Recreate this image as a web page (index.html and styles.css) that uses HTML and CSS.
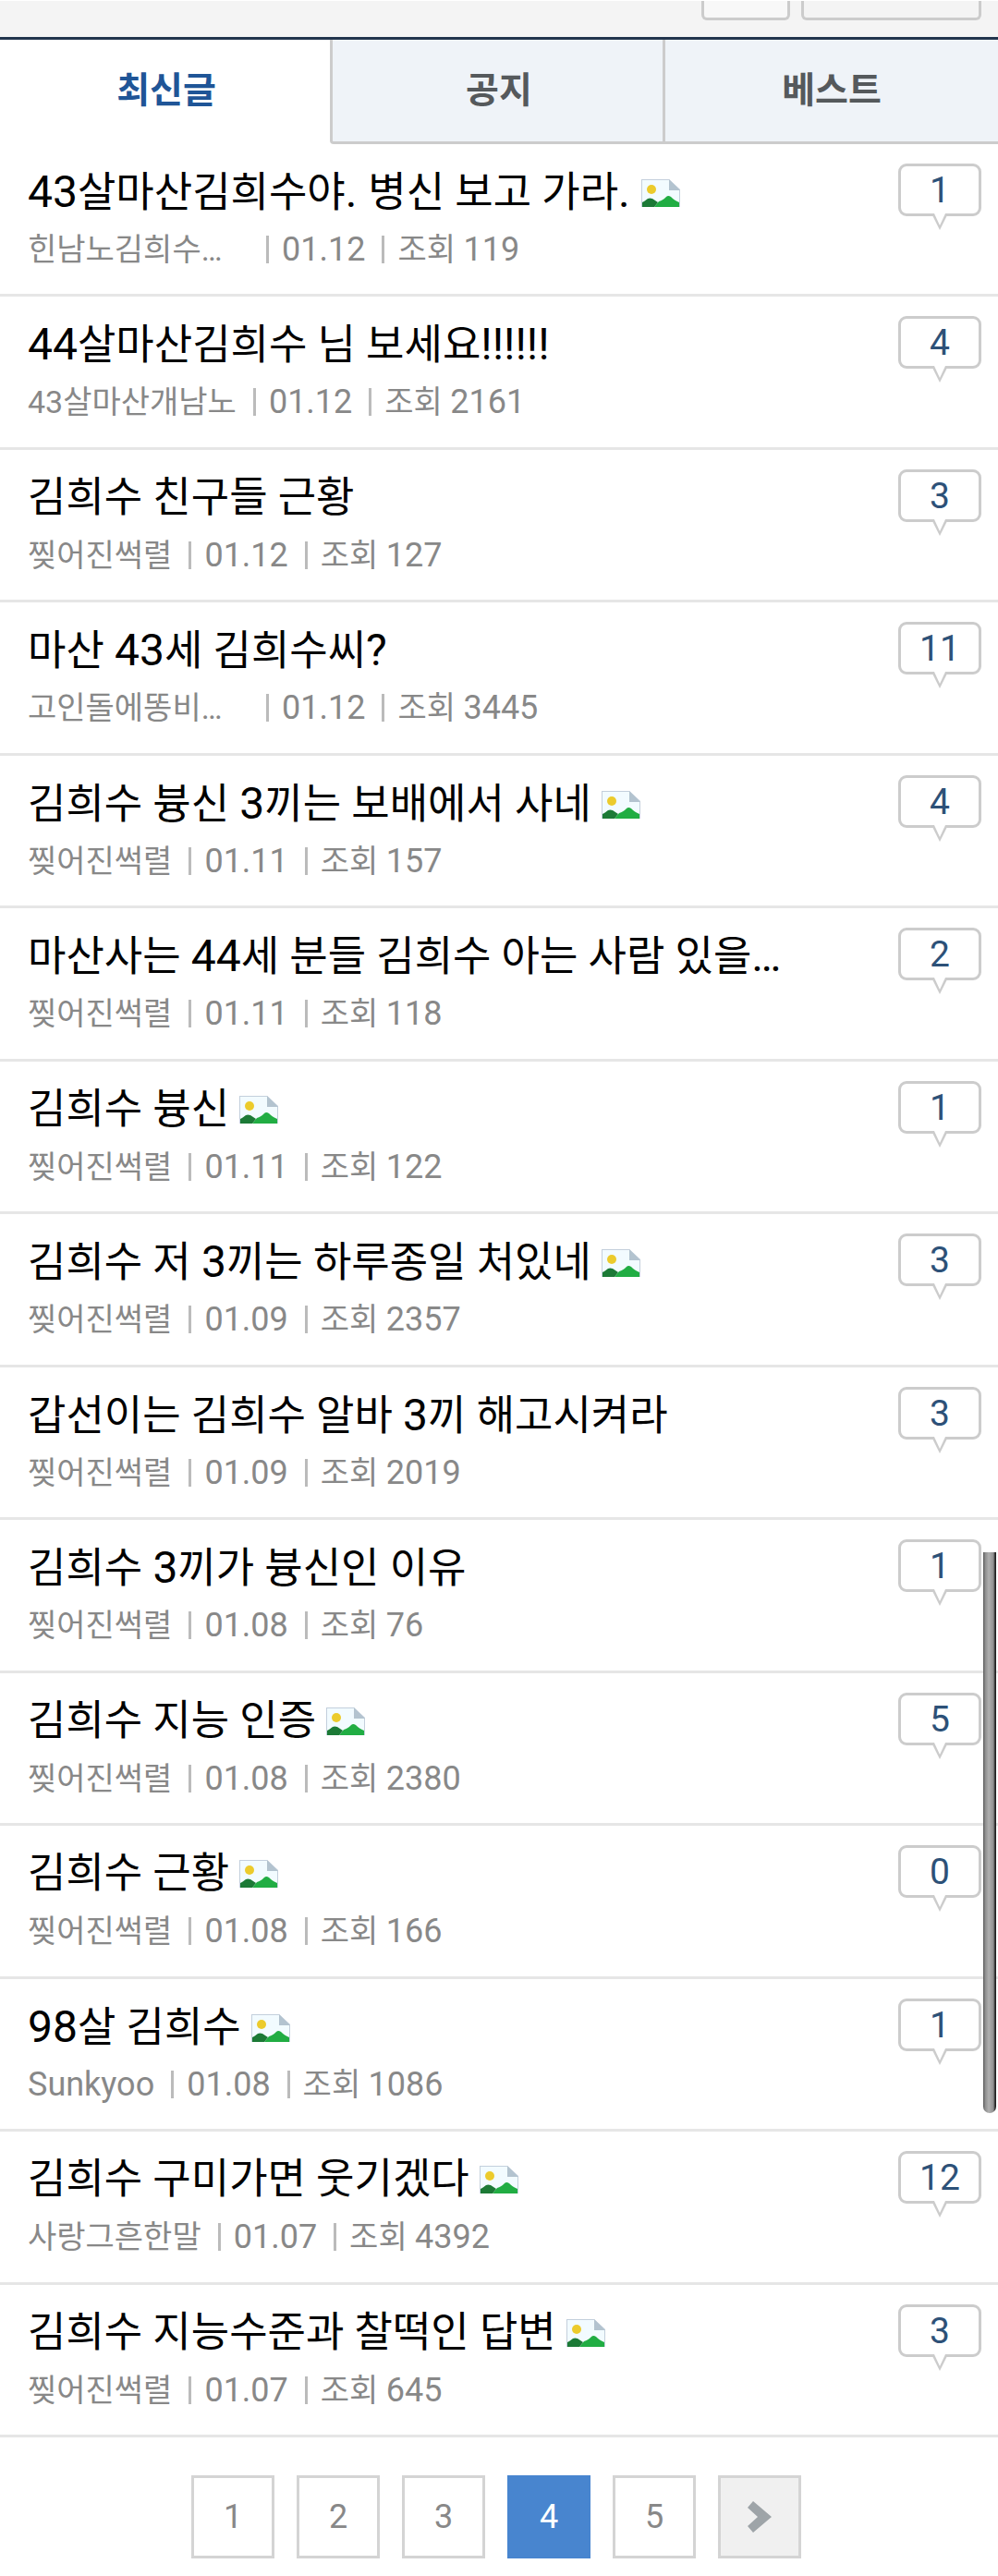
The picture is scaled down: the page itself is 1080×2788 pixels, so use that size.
FILE: index.html
```html
<!DOCTYPE html>
<html lang="ko">
<head>
  <meta charset="UTF-8">
  <meta name="viewport" content="width=device-width, initial-scale=1">
  <title>게시판</title>
  <link rel="stylesheet" href="styles.css">
</head>
<body>
  <!-- Picture icon used by the titles -->
  <svg class="defs" aria-hidden="true">
    <symbol id="pic" viewBox="0 0 42 30">
      <path d="M0 0h30l12 11v19H0z" fill="#c3cfdc"/>
      <path d="M1 1h29v11h11v18H1z" fill="#f2fbff"/>
      <path d="M30 0v12h12z" fill="#b3c3cf"/>
      <circle cx="11" cy="11" r="5" fill="#eccb2c"/>
      <path d="M14 30l5-6c3-1 5-2 8-5q2-2 5 0c3 3 5 4 9 6v5z" fill="#21ad43"/>
      <path d="M1 30v-5c3-1 4-3 6-4q2-1 5 0l6 4-4 5z" fill="#1c7a36"/>
    </symbol>
  </svg>

  <header class="top">
    <button class="top-btn" type="button" aria-label="검색"></button>
    <button class="top-btn wide" type="button" aria-label="글쓰기"></button>
  </header>

  <nav class="tabs">
    <a class="tab on" href="#">최신글</a>
    <a class="tab" href="#">공지</a>
    <a class="tab" href="#">베스트</a>
  </nav>

  <ul class="list">
    <li class="item">
      <div class="post">
        <a class="title" href="#"><span class="num">43</span>살마산김희수야<span class="num">. </span>병신 보고 가라<span class="num">. </span><svg class="pic"><use href="#pic"/></svg></a>
        <div class="meta"><span class="name cut">힌남노김희수…</span><span class="num">01.12</span><span>조회 <span class="num">119</span></span></div>
      </div>
      <a class="reply" href="#">1</a>
    </li>
    <li class="item">
      <div class="post">
        <a class="title" href="#"><span class="num">44</span>살마산김희수 님 보세요<span class="num">!!!!!!</span></a>
        <div class="meta"><span class="name">43살마산개남노</span><span class="num">01.12</span><span>조회 <span class="num">2161</span></span></div>
      </div>
      <a class="reply" href="#">4</a>
    </li>
    <li class="item">
      <div class="post">
        <a class="title" href="#">김희수 친구들 근황</a>
        <div class="meta"><span class="name">찢어진썩렬</span><span class="num">01.12</span><span>조회 <span class="num">127</span></span></div>
      </div>
      <a class="reply" href="#">3</a>
    </li>
    <li class="item">
      <div class="post">
        <a class="title" href="#">마산 <span class="num">43</span>세 김희수씨<span class="num">?</span></a>
        <div class="meta"><span class="name cut">고인돌에똥비…</span><span class="num">01.12</span><span>조회 <span class="num">3445</span></span></div>
      </div>
      <a class="reply" href="#">11</a>
    </li>
    <li class="item">
      <div class="post">
        <a class="title" href="#">김희수 븅신 <span class="num">3</span>끼는 보배에서 사네 <svg class="pic"><use href="#pic"/></svg></a>
        <div class="meta"><span class="name">찢어진썩렬</span><span class="num">01.11</span><span>조회 <span class="num">157</span></span></div>
      </div>
      <a class="reply" href="#">4</a>
    </li>
    <li class="item">
      <div class="post">
        <a class="title" href="#">마산사는 <span class="num">44</span>세 분들 김희수 아는 사람 있을<span class="num">…</span></a>
        <div class="meta"><span class="name">찢어진썩렬</span><span class="num">01.11</span><span>조회 <span class="num">118</span></span></div>
      </div>
      <a class="reply" href="#">2</a>
    </li>
    <li class="item">
      <div class="post">
        <a class="title" href="#">김희수 븅신 <svg class="pic"><use href="#pic"/></svg></a>
        <div class="meta"><span class="name">찢어진썩렬</span><span class="num">01.11</span><span>조회 <span class="num">122</span></span></div>
      </div>
      <a class="reply" href="#">1</a>
    </li>
    <li class="item">
      <div class="post">
        <a class="title" href="#">김희수 저 <span class="num">3</span>끼는 하루종일 처있네 <svg class="pic"><use href="#pic"/></svg></a>
        <div class="meta"><span class="name">찢어진썩렬</span><span class="num">01.09</span><span>조회 <span class="num">2357</span></span></div>
      </div>
      <a class="reply" href="#">3</a>
    </li>
    <li class="item">
      <div class="post">
        <a class="title" href="#">갑선이는 김희수 알바 <span class="num">3</span>끼 해고시켜라</a>
        <div class="meta"><span class="name">찢어진썩렬</span><span class="num">01.09</span><span>조회 <span class="num">2019</span></span></div>
      </div>
      <a class="reply" href="#">3</a>
    </li>
    <li class="item">
      <div class="post">
        <a class="title" href="#">김희수 <span class="num">3</span>끼가 븅신인 이유</a>
        <div class="meta"><span class="name">찢어진썩렬</span><span class="num">01.08</span><span>조회 <span class="num">76</span></span></div>
      </div>
      <a class="reply" href="#">1</a>
    </li>
    <li class="item">
      <div class="post">
        <a class="title" href="#">김희수 지능 인증 <svg class="pic"><use href="#pic"/></svg></a>
        <div class="meta"><span class="name">찢어진썩렬</span><span class="num">01.08</span><span>조회 <span class="num">2380</span></span></div>
      </div>
      <a class="reply" href="#">5</a>
    </li>
    <li class="item">
      <div class="post">
        <a class="title" href="#">김희수 근황 <svg class="pic"><use href="#pic"/></svg></a>
        <div class="meta"><span class="name">찢어진썩렬</span><span class="num">01.08</span><span>조회 <span class="num">166</span></span></div>
      </div>
      <a class="reply" href="#">0</a>
    </li>
    <li class="item">
      <div class="post">
        <a class="title" href="#"><span class="num">98</span>살 김희수 <svg class="pic"><use href="#pic"/></svg></a>
        <div class="meta"><span class="name num">Sunkyoo</span><span class="num">01.08</span><span>조회 <span class="num">1086</span></span></div>
      </div>
      <a class="reply" href="#">1</a>
    </li>
    <li class="item">
      <div class="post">
        <a class="title" href="#">김희수 구미가면 웃기겠다 <svg class="pic"><use href="#pic"/></svg></a>
        <div class="meta"><span class="name">사랑그흔한말</span><span class="num">01.07</span><span>조회 <span class="num">4392</span></span></div>
      </div>
      <a class="reply" href="#">12</a>
    </li>
    <li class="item">
      <div class="post">
        <a class="title" href="#">김희수 지능수준과 찰떡인 답변 <svg class="pic"><use href="#pic"/></svg></a>
        <div class="meta"><span class="name">찢어진썩렬</span><span class="num">01.07</span><span>조회 <span class="num">645</span></span></div>
      </div>
      <a class="reply" href="#">3</a>
    </li>
  </ul>

  <!-- Paging -->
  <nav class="paging">
    <a href="#">1</a>
    <a href="#">2</a>
    <a href="#">3</a>
    <a class="on" href="#">4</a>
    <a href="#">5</a>
    <a class="next" href="#" aria-label="다음">
      <svg width="26" height="34" viewBox="0 0 26 34"><path d="M6 0l20 17L6 34 0 27l11-10L0 7z" fill="#9ea4a8"/></svg>
    </a>
  </nav>

  <div class="scrollbar"></div>
</body>
</html>
```

FILE: styles.css
```css
* {
  box-sizing: border-box;
}

body {
  margin: 0;
  position: relative;
  background: #fff;
  color: #000;
  font-family: Roboto, "Noto Sans CJK KR", sans-serif;
}

a {
  color: inherit;
  text-decoration: none;
}

.defs {
  display: none;
}

/* Top bar */
.top {
  display: flex;
  justify-content: flex-end;
  gap: 12px;
  padding: 0 18px 18px;
  background: #f4f4f4;
  border-top: 1px solid #fff;
  border-bottom: 3px solid #22354d;
}

.top-btn {
  width: 96px;
  height: 21px;
  padding: 0;
  background: #f8f8f8;
  border: 3px solid #ccc;
  border-top: 0;
  border-radius: 0 0 6px 6px;
}

.top-btn.wide {
  width: 195px;
  background: #f4f4f4;
}

/* Tabs */
.tabs {
  display: grid;
  grid-template-columns: repeat(3, 1fr);
}

.tab {
  height: 113px;
  margin-left: -3px;
  background: #eff3f8;
  border-left: 3px solid #ccc;
  border-bottom: 3px solid #ccc;
  color: #55595c;
  font-size: 39px;
  font-weight: bold;
  line-height: 110px;
  text-align: center;
}

.tab:nth-child(2) {
  border-bottom-left-radius: 4px;
}

.tab.on {
  background: #fff;
  border-color: #fff;
  color: #1f5597;
}

/* Post list */
.list {
  margin: 0;
  padding: 0;
  list-style: none;
}

.item {
  display: flex;
  justify-content: space-between;
  padding: 22px 18px 28px 30px;
  border-bottom: 3px solid #e6e6e6;
}

.item:nth-child(even) {
  padding-bottom: 29px;
}

.post {
  min-width: 0;
}

.title {
  display: block;
  height: 60px;
  font-size: 45px;
  line-height: 60px;
  white-space: nowrap;
}

.title .num {
  font-size: 48px;
}

.pic {
  width: 42px;
  height: 30px;
}

.meta {
  display: flex;
  align-items: center;
  height: 40px;
  margin-top: 12px;
  color: #888;
  font-size: 34px;
  line-height: 40px;
  white-space: nowrap;
}

.meta > span {
  display: flex;
  align-items: center;
  white-space: pre;
}

.meta > span + span::before {
  content: "";
  width: 3px;
  height: 30px;
  margin: 0 14px 0 18px;
  background: #bbb;
}

.num {
  font-size: 36px;
}

.cut {
  width: 240px;
}

/* Reply count bubble */
.reply {
  position: relative;
  width: 90px;
  height: 57px;
  margin-top: -1px;
  border: 3px solid #ccc;
  border-radius: 9px;
  color: #2d5178;
  font-size: 39px;
  line-height: 52px;
  text-align: center;
}

.reply::before,
.reply::after {
  content: "";
  position: absolute;
  top: 51px;
  left: 33px;
  border: 9px solid transparent;
  border-top: 18px solid #ccc;
  border-bottom: 0;
}

.reply::after {
  left: 36px;
  border-width: 13px 6px 0;
  border-top-color: #fff;
}

/* Paging */
.paging {
  display: flex;
  justify-content: center;
  gap: 24px;
  padding: 41px 6px 19px 0;
}

.paging a {
  display: flex;
  align-items: center;
  justify-content: center;
  width: 90px;
  height: 90px;
  border: 3px solid #d4d4d4;
  color: #888;
  font-size: 36px;
}

.paging .on {
  background: #4885cf;
  border-color: #4885cf;
  color: #fff;
}

.paging .next {
  background: #f0f0f0;
}

/* Scroll thumb, lies over the list */
.scrollbar {
  position: absolute;
  top: 1680px;
  right: 2px;
  width: 14px;
  height: 607px;
  border-radius: 0 0 7px 7px;
  background: linear-gradient(to right, #555 0, #8c8c8c 2px, #b0b0b0 6px, #909090 11px, #222 13px);
}
```
